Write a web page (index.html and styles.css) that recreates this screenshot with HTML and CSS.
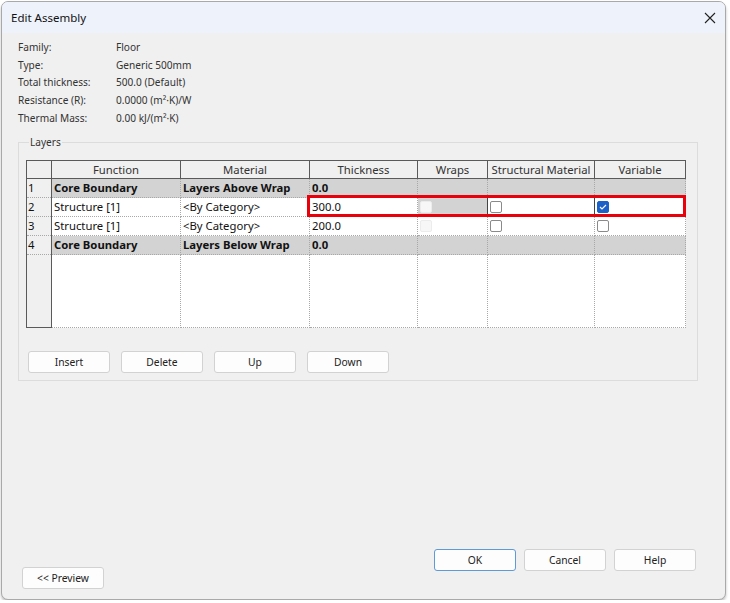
FILE: index.html
```html
<!DOCTYPE html>
<html>
<head>
<meta charset="utf-8">
<link rel="stylesheet" href="styles.css">
</head>
<body>
<div class="window">
  <div class="titlebar">
    <span class="title">Edit Assembly</span>
    <svg class="close" width="12" height="12" viewBox="0 0 12 12"><path d="M1 1 L11 11 M11 1 L1 11" stroke="#222" stroke-width="1.1" fill="none"/></svg>
  </div>
  <div class="content">
    <div class="info">
      <span>Family:</span><span>Floor</span>
      <span>Type:</span><span>Generic 500mm</span>
      <span>Total thickness:</span><span>500.0 (Default)</span>
      <span>Resistance (R):</span><span>0.0000 (m²·K)/W</span>
      <span>Thermal Mass:</span><span>0.00 kJ/(m²·K)</span>
    </div>
    <fieldset class="group">
      <legend>Layers</legend>
      <div class="grid-wrap">
        <table class="grid">
          <colgroup>
            <col class="c-num"><col class="c-fn"><col class="c-mat"><col class="c-th"><col class="c-wr"><col class="c-st"><col class="c-var">
          </colgroup>
          <thead>
            <tr><th class="num"></th><th>Function</th><th>Material</th><th>Thickness</th><th>Wraps</th><th>Structural Material</th><th>Variable</th></tr>
          </thead>
          <tbody>
            <tr class="core"><td class="num">1</td><td>Core Boundary</td><td>Layers Above Wrap</td><td>0.0</td><td></td><td></td><td></td></tr>
            <tr><td class="num">2</td><td>Structure [1]</td><td>&lt;By Category&gt;</td><td>300.0</td><td class="dis"><span class="cb off"></span></td><td class="focus"><span class="cb"></span></td><td><span class="cb on"><svg width="8" height="6" viewBox="0 0 8 6"><path d="M1 3 L3 5 L7 1" stroke="#fff" stroke-width="1.1" fill="none"/></svg></span></td></tr>
            <tr><td class="num">3</td><td>Structure [1]</td><td>&lt;By Category&gt;</td><td>200.0</td><td><span class="cb off"></span></td><td><span class="cb"></span></td><td><span class="cb"></span></td></tr>
            <tr class="core"><td class="num">4</td><td>Core Boundary</td><td>Layers Below Wrap</td><td>0.0</td><td></td><td></td><td></td></tr>
            <tr class="filler"><td class="num"></td><td></td><td></td><td></td><td></td><td></td><td></td></tr>
          </tbody>
        </table>
        <div class="highlight"></div>
      </div>
      <div class="actions">
        <button class="btn">Insert</button>
        <button class="btn">Delete</button>
        <button class="btn">Up</button>
        <button class="btn">Down</button>
      </div>
    </fieldset>
    <div class="footer">
      <button class="btn">&lt;&lt; Preview</button>
      <div class="dialog-btns">
        <button class="btn default">OK</button>
        <button class="btn">Cancel</button>
        <button class="btn">Help</button>
      </div>
    </div>
  </div>
</div>
</body>
</html>
```

FILE: styles.css
```css
* { box-sizing: border-box; }
html, body { margin: 0; padding: 0; background: #ffffff; }
body { font-family: "Noto Sans", "Open Sans", sans-serif; color: #222; }

.window {
  margin: 1px 0 0 1px;
  width: 725px;
  height: 599px;
  border: 1px solid #a9a9a9;
  border-radius: 7px;
  background: #f0f0f0;
  display: flex;
  flex-direction: column;
  overflow: hidden;
  box-shadow: 0 2px 3px rgba(0,0,0,0.25);
}

.titlebar {
  height: 31px;
  flex: none;
  background: #eef2fb;
  display: flex;
  align-items: center;
  justify-content: space-between;
  padding: 0 9px 0 9px;
}
.title { font-size: 11.5px; color: #111; }
.close { margin-top: 1px; }

.content {
  flex: 1;
  display: flex;
  flex-direction: column;
  padding: 5px 0 0 16px;
}

.info {
  display: grid;
  grid-template-columns: 98px auto;
  grid-auto-rows: 17.7px;
  align-items: center;
  font-size: 10.1px;
  color: #333;
  width: 300px;
}

.group {
  margin: 9px 0 0 0;
  width: 680px;
  height: 246px;
  border: 1px solid #dcdcdc;
  padding: 0 0 0 7px;
  min-width: 0;
}
.group legend {
  font-size: 10.1px;
  color: #333;
  padding: 0 1px;
  margin-left: 3px;
}

.grid-wrap { position: relative; width: 659px; margin-top: 11px; }

.grid {
  border-collapse: collapse;
  table-layout: fixed;
  width: 659px;
  font-size: 11.3px;
  background: #fff;
}
.c-num { width: 25px; }
.c-fn { width: 129px; }
.c-mat { width: 129px; }
.c-th { width: 108px; }
.c-wr { width: 70px; }
.c-st { width: 107px; }
.c-var { width: 91px; }

.grid th {
  height: 18px;
  font-weight: normal;
  color: #333;
  background: #f0f0f0;
  border: 1px solid #5a5a5a;
  padding: 0;
  text-align: center;
  line-height: 16px;
}
.grid td {
  height: 19px;
  border: 1px dotted #a8a8a8;
  padding: 0 2px;
  line-height: 16px;
  white-space: nowrap;
  color: #111;
}
.grid .num {
  background: #f0f0f0;
  border-left: 1px solid #5a5a5a;
  border-right: 1px solid #5a5a5a;
  padding-left: 1px;
}
.grid tr.core td { background: #d3d3d3; font-weight: bold; }
.grid tr.core td.num { background: #f0f0f0; font-weight: normal; }
.grid td.dis { background: #d3d3d3; }
.grid td.focus { border: 1px solid #444; }
.grid tr.filler td { height: 73px; }
.grid tr.filler td.num { border-bottom: 1px solid #5a5a5a; }

.cb {
  display: inline-block;
  width: 12px;
  height: 12px;
  border: 1px solid #8a8a8a;
  border-radius: 2px;
  background: #fff;
  vertical-align: middle;
  margin-top: -2px;
}
.cb.off { border-color: #ececec; background: #f7f7f7; }
.cb.on {
  background: #1a62c7;
  border-color: #1a62c7;
  display: inline-flex;
  align-items: center;
  justify-content: center;
}

.highlight {
  position: absolute;
  left: 281px;
  top: 35px;
  width: 379px;
  height: 22px;
  border: 3px solid #e8000b;
}

.actions {
  display: flex;
  gap: 11px;
  margin: 23px 0 0 2px;
}

.btn {
  width: 82px;
  height: 22px;
  font-family: inherit;
  font-size: 10.3px;
  color: #222;
  background: #fdfdfd;
  border: 1px solid #d2d2d2;
  border-radius: 3px;
  padding: 0;
}
.btn.default { border-color: #5e9ad6; }

.footer {
  margin-top: auto;
  display: flex;
  justify-content: space-between;
  align-items: flex-start;
  padding: 0 29px 10px 4px;
  height: 50px;
}
.dialog-btns { display: flex; gap: 8px; }
.footer > .btn { margin-top: 18px; }
```
